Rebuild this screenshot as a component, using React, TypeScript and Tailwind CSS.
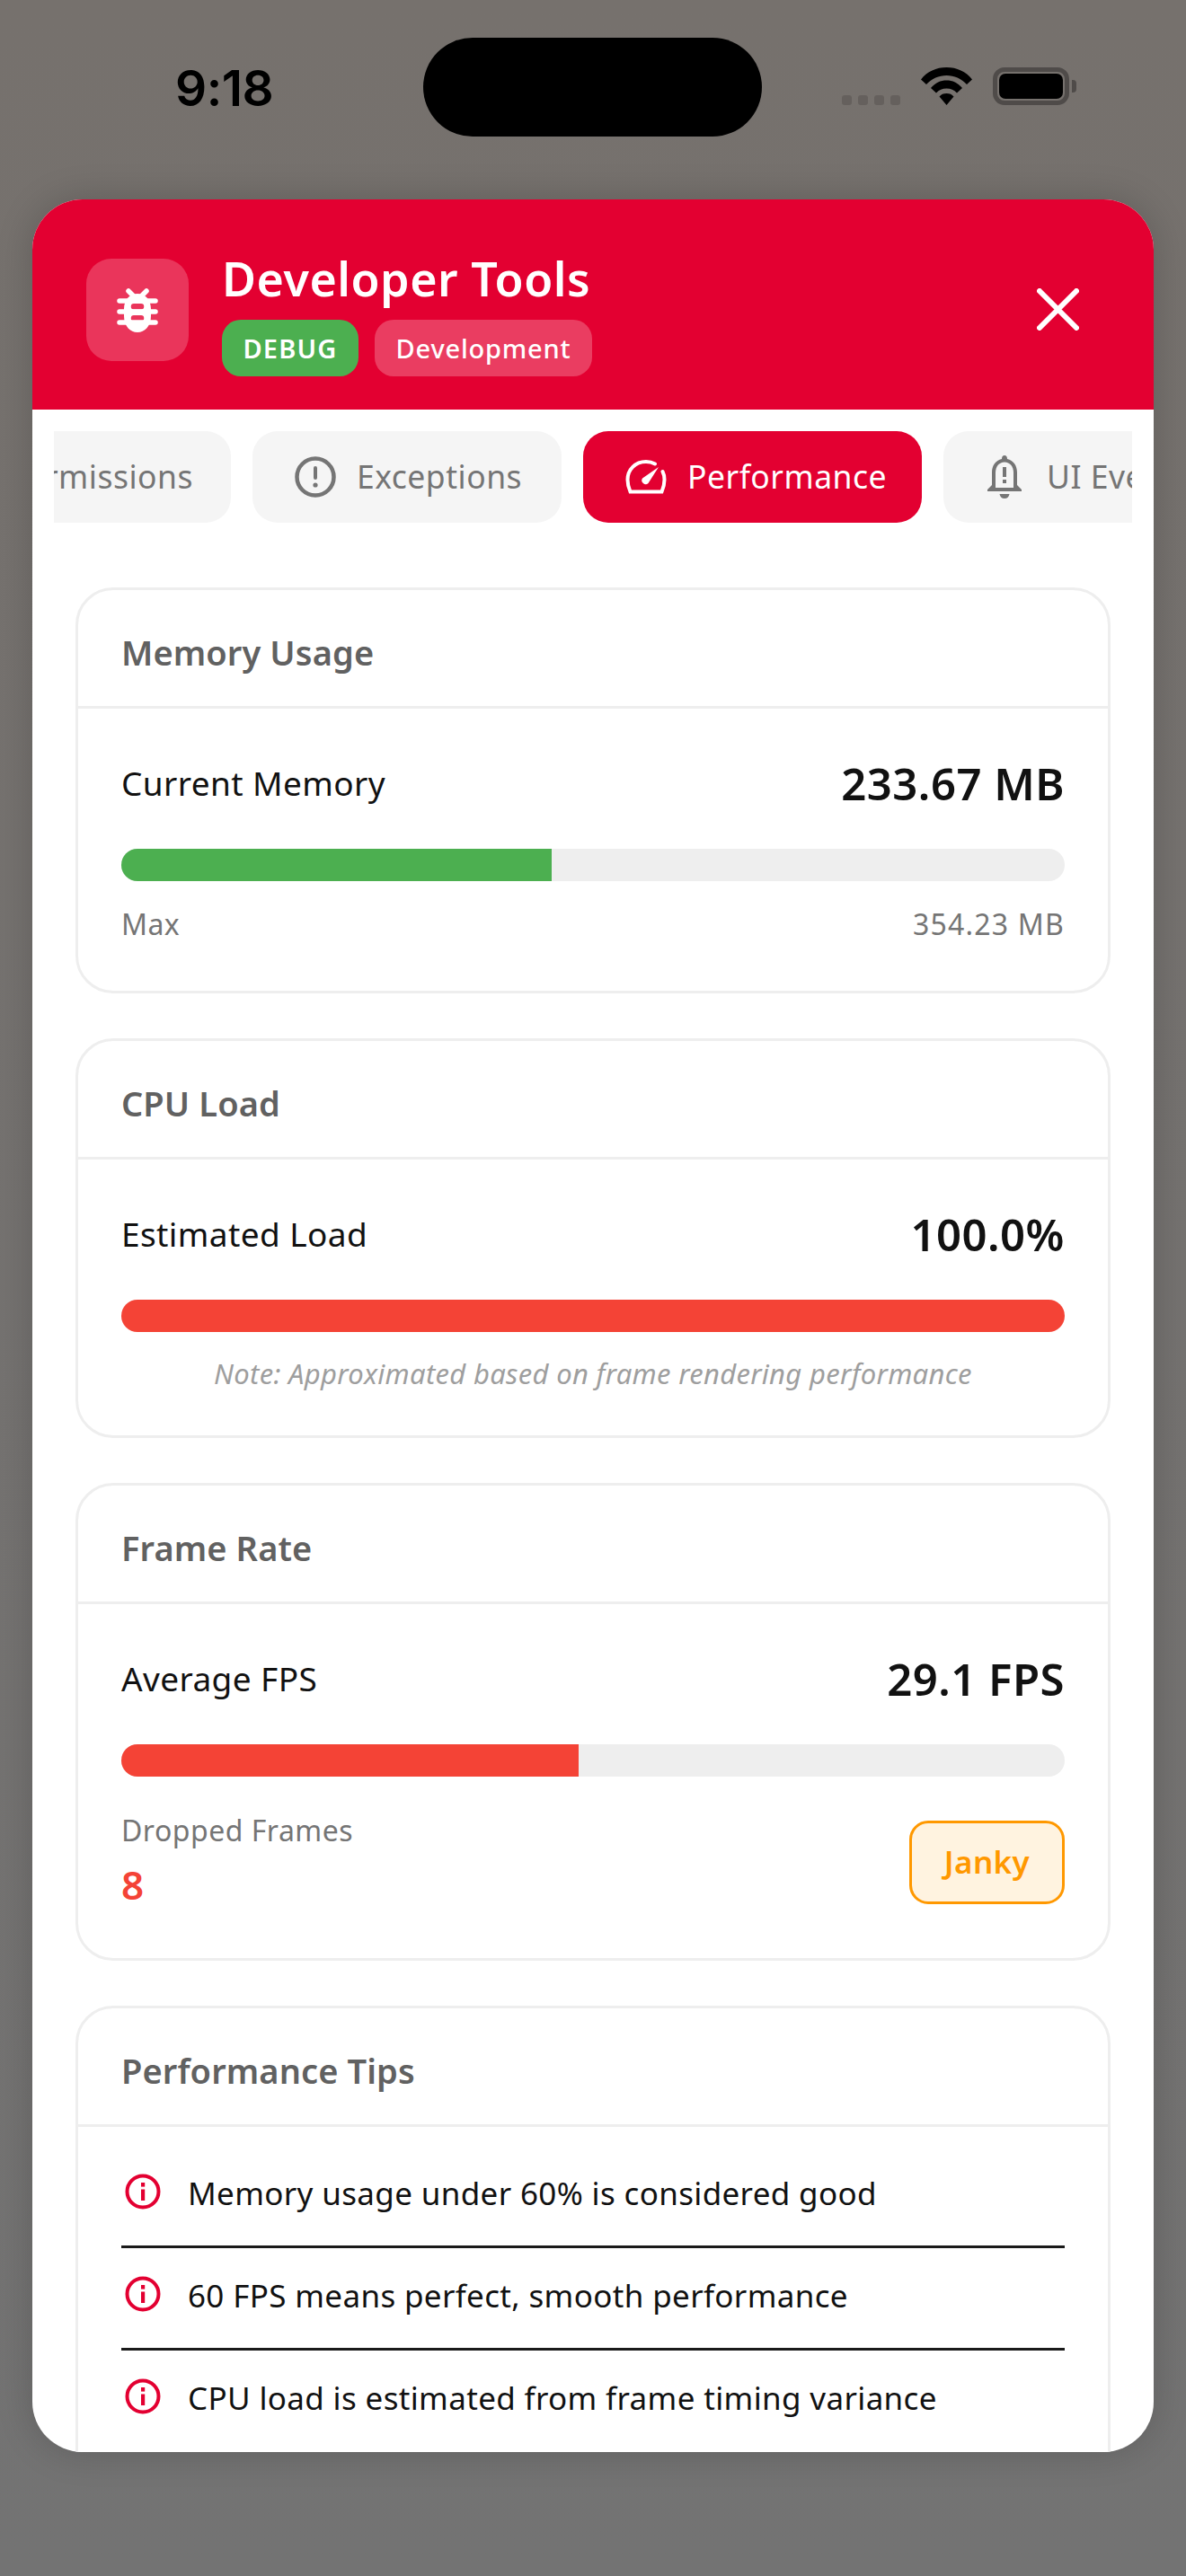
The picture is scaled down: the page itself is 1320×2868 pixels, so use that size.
import React from "react";

const FONT = "font-['Noto_Sans','Liberation_Sans',sans-serif]";

function BugIcon() {
  return (
    <svg width="54" height="54" viewBox="0 0 54 54" fill="none">
      <g stroke="#fff" strokeWidth="5.5" strokeLinecap="round">
        <path d="M17 6 L22 11" />
        <path d="M37 6 L32 11" />
        <path d="M7 17 H47" />
        <path d="M7 29 H47" />
        <path d="M7 41 H47" />
      </g>
      <path fillRule="evenodd" fill="#fff" d="M27 9 C18 9 12 16 12 26 V34 C12 45 19 52 27 52 C35 52 42 45 42 34 V26 C42 16 36 9 27 9 Z M23 20 H31 A3.2 3.2 0 0 1 31 26.5 H23 A3.2 3.2 0 0 1 23 20 Z M23 33 H31 A3.2 3.2 0 0 1 31 39.5 H23 A3.2 3.2 0 0 1 23 33 Z" />
    </svg>
  );
}

function InfoIcon() {
  return (
    <svg width="40" height="40" viewBox="0 0 40 40" fill="none" className="shrink-0">
      <circle cx="20" cy="20" r="17.5" stroke="#e30031" strokeWidth="4" />
      <rect x="18" y="10" width="4.2" height="4.6" fill="#e30031" />
      <rect x="18" y="17.5" width="4.2" height="12.5" fill="#e30031" />
    </svg>
  );
}

function Row({ label, value }: { label: string; value: string }) {
  return (
    <div className="flex items-center justify-between h-[66px]">
      <span className="text-[37px] leading-[66px] tracking-[0.4px] text-[#111111]">{label}</span>
      <span className="text-[49px] leading-[66px] font-semibold tracking-[0.5px] text-[#111111]">{value}</span>
    </div>
  );
}

function Bar({ pct, color }: { pct: number; color: string }) {
  return (
    <div className="mt-[40px] h-[36px] rounded-full bg-[#eeeeee] overflow-hidden">
      <div className="h-full" style={{ width: `${pct}%`, backgroundColor: color }} />
    </div>
  );
}

function Card({ title, children }: { title: string; children: React.ReactNode }) {
  return (
    <section className="rounded-[42px] border-[3px] border-[#eeeeee] bg-white shrink-0">
      <div className="h-[132px] border-b-[3px] border-[#eeeeee] pl-[48px] pt-[10px] flex items-center">
        <h2 className="text-[38px] font-semibold tracking-[0.1px] text-[#616161]">{title}</h2>
      </div>
      {children}
    </section>
  );
}

function Tip({ text, line }: { text: string; line?: boolean }) {
  return (
    <div className={`flex items-start h-[114px] pt-[31px] gap-[30px] pl-[4px] ${line ? "border-b-[3px] border-[#1a1a1a]" : ""}`}>
      <InfoIcon />
      <span className="text-[35px] leading-[44px] tracking-[0.35px] text-[#111111]">{text}</span>
    </div>
  );
}

export default function App() {
  return (
    <div className={`${FONT} w-[1320px] h-[2868px] overflow-hidden bg-gradient-to-b from-[#76716d] to-[#737373]`}>
      {/* status bar */}
      <div className="h-[222px] flex items-start">
        <div className="ml-[195px] w-[276px] pt-[63px] text-[55px] leading-[70px] font-semibold text-black font-['Inter',sans-serif] tracking-[-0.5px]">9:18</div>
        <div className="mt-[42px] w-[377px] h-[110px] rounded-full bg-black" />
        <div className="ml-[89px] mt-[75px] flex items-end h-[42px]">
          <div className="flex gap-[7px]">
            <span className="w-[11px] h-[11px] rounded-[3px] bg-[#65605d]" />
            <span className="w-[11px] h-[11px] rounded-[3px] bg-[#65605d]" />
            <span className="w-[11px] h-[11px] rounded-[3px] bg-[#65605d]" />
            <span className="w-[11px] h-[11px] rounded-[3px] bg-[#65605d]" />
          </div>
          <svg className="ml-[23px]" width="57" height="42" viewBox="0 0 57 42">
            <path fill="#000" d="M28.5 0 C40 0 50 4.5 57 13.5 L51 19 C45 12.5 37 9 28.5 9 C20 9 12 12.5 6 19 L0 13.5 C7 4.5 17 0 28.5 0 Z M28.5 14.5 C35 14.5 41 17 46 23 L40 28.5 C37 25 33 23.5 28.5 23.5 C24 23.5 20 25 17 28.5 L11 23 C16 17 22 14.5 28.5 14.5 Z M28.5 29 C32 29 34.500 30 36.500 32.500 L28.5 42 L20.500 32.500 C22.500 30 25 29 28.5 29 Z" />
          </svg>
          <div className="ml-[23px] w-[85px] h-[42px] rounded-[13px] border-[5px] border-[#4f4b49] p-[2px]">
            <div className="w-full h-full rounded-[7px] bg-black" />
          </div>
          <span className="ml-[3px] mb-[14px] w-[5px] h-[14px] rounded-r-[4px] bg-[#4f4b49]" />
        </div>
      </div>

      {/* modal */}
      <div className="mx-[36px] h-[2508px] rounded-[56px] bg-white overflow-hidden flex flex-col shadow-[0_0_40px_rgba(0,0,0,0.18)]">
        <header className="h-[234px] shrink-0 bg-[#e30031] flex items-start pl-[60px] pr-[83px] pt-[66px]">
          <div className="w-[114px] h-[114px] rounded-[28px] bg-[#ea355b] flex items-center justify-center">
            <BugIcon />
          </div>
          <div className="ml-[37px] -mt-[11px]">
            <h1 className="text-[52px] leading-[66px] font-semibold text-white tracking-[0.5px]">Developer Tools</h1>
            <div className="flex gap-[18px] mt-[13px]">
              <span className="h-[63px] w-[152px] rounded-[21px] bg-[#4caf50] text-white text-[29px] font-semibold tracking-[1.2px] flex items-center justify-center">DEBUG</span>
              <span className="h-[63px] w-[242px] rounded-[21px] bg-[#ea3d61] text-white text-[29px] font-medium tracking-[0.8px] flex items-center justify-center">Development</span>
            </div>
          </div>
          <svg className="ml-auto mt-[33px]" width="47" height="47" viewBox="0 0 47 47" fill="none">
            <path d="M3 3 L44 44 M44 3 L3 44" stroke="#fff" strokeWidth="6" strokeLinecap="round" />
          </svg>
        </header>

        {/* tabs */}
        <div className="mx-[24px] mt-[24px] h-[102px] shrink-0 overflow-hidden flex gap-[24px] text-[35.5px] tracking-[0.5px]">
          <div className="w-[365px] -ml-[168px] shrink-0 h-full bg-[#f5f5f5] rounded-[28px] flex items-center justify-end pr-[42px] text-[#757575]">
            <span className="whitespace-nowrap">Permissions</span>
          </div>
          <div className="w-[344px] shrink-0 h-full rounded-[28px] bg-[#f5f5f5] flex items-center pl-[47px] gap-[23px] text-[#757575]">
            <svg width="46" height="46" viewBox="0 0 46 46" fill="none">
              <circle cx="23" cy="23" r="20.500" stroke="#757575" strokeWidth="4.5" />
              <rect x="21" y="11" width="4" height="15" rx="2" fill="#757575" />
              <circle cx="23" cy="32" r="2.600" fill="#757575" />
            </svg>
            <span>Exceptions</span>
          </div>
          <div className="w-[377px] shrink-0 h-full rounded-[28px] bg-[#e30031] flex items-center pl-[47px] gap-[23px] text-white">
            <svg width="46" height="38" viewBox="0 0 46 38" fill="none">
              <path d="M33 4.500 C30 2.800 27 2 23 2 C11 2 2.500 11 2.500 22 C2.500 27 3.500 31 5.500 35.500 H40.500 C42.500 31 43.500 27 43.500 22 C43.500 18.500 42.800 15.500 41.500 13" stroke="#fff" strokeWidth="4" strokeLinecap="round" />
              <path d="M37 8 L25.500 26 A4.300 4.300 0 0 1 19 20.500 Z" fill="#fff" />
            </svg>
            <span>Performance</span>
          </div>
          <div className="w-[300px] shrink-0 h-full rounded-[28px] bg-[#f5f5f5] flex items-center pl-[47px] gap-[26px] text-[#757575]">
            <svg width="42" height="50" viewBox="0 0 42 50" fill="none" className="shrink-0">
              <path d="M21 1 C19 1 18 2.500 18 5 C11 6.500 7 12.500 7 20 V34 L2 39 V41 H40 V39 L35 34 V20 C35 12.500 31 6.500 24 5 C24 2.500 23 1 21 1 Z" fill="#757575" />
              <path d="M21 8.500 C15 8.500 11 13.500 11 20 V37 H31 V20 C31 13.500 27 8.500 21 8.500 Z" fill="#f5f5f5" />
              <rect x="19" y="14" width="4" height="11" fill="#757575" />
              <rect x="19" y="28" width="4" height="4" fill="#757575" />
              <path d="M15.500 44 H26.500 C26 47 24 49 21 49 C18 49 16 47 15.500 44 Z" fill="#757575" />
            </svg>
            <span className="whitespace-nowrap">UI Events</span>
          </div>
        </div>

        {/* content */}
        <div className="flex flex-col gap-[50px] mx-[48px] mt-[72px]">
          <Card title="Memory Usage">
            <div className="px-[48px] pt-[50px] h-[314px]">
              <Row label="Current Memory" value="233.67 MB" />
              <Bar pct={45.6} color="#4caf50" />
              <div className="mt-[24px] flex justify-between text-[32px] leading-[48px] tracking-[0.4px] text-[#757575]">
                <span>Max</span>
                <span className="tracking-[1.2px]">354.23 MB</span>
              </div>
            </div>
          </Card>
          <Card title="CPU Load">
            <div className="px-[48px] pt-[50px] h-[307px]">
              <Row label="Estimated Load" value="100.0%" />
              <Bar pct={100} color="#f44336" />
              <p className="mt-[24px] text-center text-[31px] leading-[44px] italic tracking-[0.3px] text-[#9e9e9e]">Note: Approximated based on frame rendering performance</p>
            </div>
          </Card>
          <Card title="Frame Rate">
            <div className="px-[48px] pt-[50px] h-[394px]">
              <Row label="Average FPS" value="29.1 FPS" />
              <Bar pct={48.5} color="#f44336" />
              <div className="mt-[40px] flex justify-between items-center">
                <div>
                  <div className="text-[32px] leading-[44px] tracking-[0.5px] text-[#757575] -mt-[2px]">Dropped Frames</div>
                  <div className="text-[44px] leading-[60px] font-semibold text-[#f44336] mt-[8px]">8</div>
                </div>
                <div className="w-[173px] h-[93px] rounded-[21px] border-[3px] border-[#ff9800] bg-[#fff3e0] text-[#ff9800] text-[35px] font-semibold tracking-[0.4px] flex items-center justify-center">Janky</div>
              </div>
            </div>
          </Card>
          <Card title="Performance Tips">
            <div className="px-[48px] pt-[21px] pb-[48px]">
              <Tip text="Memory usage under 60% is considered good" line />
              <Tip text="60 FPS means perfect, smooth performance" line />
              <Tip text="CPU load is estimated from frame timing variance" />
            </div>
          </Card>
        </div>
      </div>
    </div>
  );
}
